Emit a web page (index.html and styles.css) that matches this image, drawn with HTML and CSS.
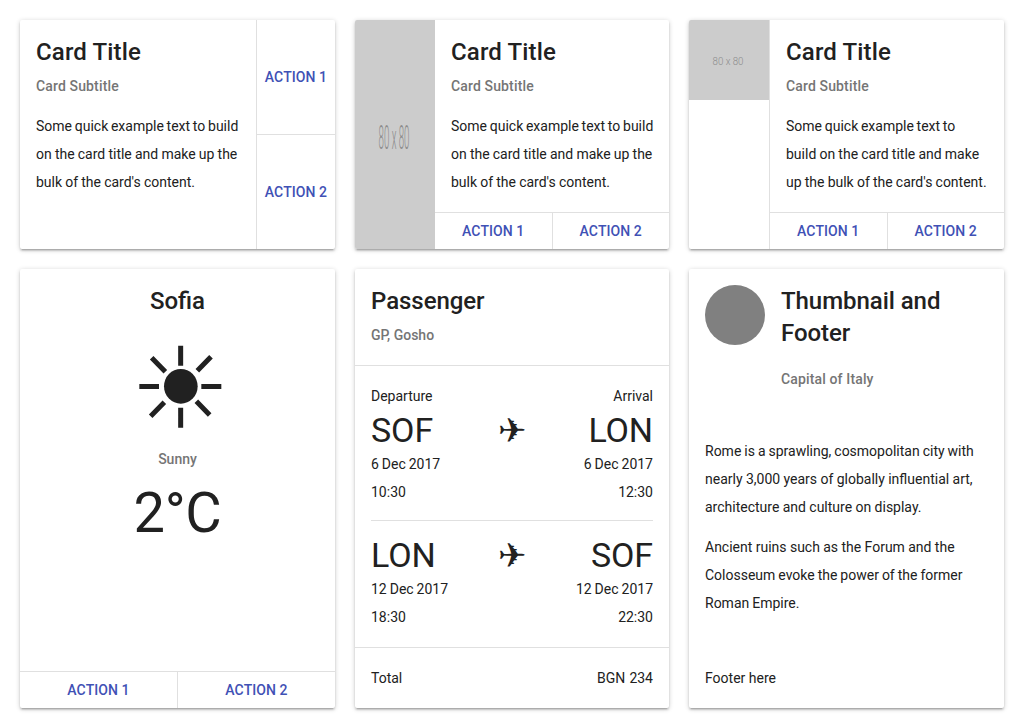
FILE: index.html
```html
<!DOCTYPE html>
<html lang="en">
<head>
<meta charset="utf-8">
<title>Cards</title>
<link rel="stylesheet" href="styles.css">
</head>
<body>
<main class="grid">
  <section class="card">
    <div class="body grow"><h2>Card Title</h2><h3>Card Subtitle</h3><p>Some quick example text to build<br><span class="loose">on the card title and make up the</span><br><span class="loose">bulk of the card's content.</span></p></div>
    <div class="actions vertical"><button>Action 1</button><button>Action 2</button></div>
  </section>
  <section class="card">
    <svg class="pic" viewBox="0 0 80 80" preserveAspectRatio="none"><rect width="80" height="80" fill="#ccc"/><text class="pic-text" x="39" y="45.2" text-anchor="middle" textLength="31" lengthAdjust="spacingAndGlyphs">80 x 80</text></svg>
    <div class="column"><div class="body grow"><h2>Card Title</h2><h3>Card Subtitle</h3><p>Some quick example text to build<br><span class="loose">on the card title and make up the</span><br><span class="loose">bulk of the card's content.</span></p></div>
    <div class="actions"><button>Action 1</button><button>Action 2</button></div></div>
  </section>
  <section class="card">
    <svg class="pic square" viewBox="0 0 80 80"><rect width="80" height="80" fill="#ccc"/><text class="pic-text" x="39" y="45" text-anchor="middle" textLength="31" lengthAdjust="spacingAndGlyphs">80 x 80</text></svg>
    <div class="column ruled"><div class="body grow"><h2>Card Title</h2><h3>Card Subtitle</h3><p>Some quick example text to<br><span class="loose">build on the card title and make</span><br><span class="loose">up the bulk of the card's content.</span></p></div>
    <div class="actions"><button>Action 1</button><button>Action 2</button></div></div>
  </section>
  <section class="card stack">
    <div class="body weather grow"><h2 class="plain">Sofia</h2>
      <svg class="sun" viewBox="0 0 260 260" role="img" aria-label="Sun"><ellipse cx="131.5" cy="130" rx="50.5" ry="52"/><path d="M131 8v60M131 194v60M7 130.5h59M193 130.5h60M44 44l41 42M222 41l-41 42M41 220l41-42M218 216l-40-41"/></svg>
      <h3 class="plain">Sunny</h3><div class="temp">2°C</div></div>
    <div class="actions"><button>Action 1</button><button>Action 2</button></div>
  </section>
  <section class="card stack">
    <div class="body passenger"><h2 class="tight">Passenger</h2><h3 class="plain">GP, Gosho</h3></div>
    <div class="flights">
      <div class="line"><span>Departure</span><span>Arrival</span></div>
      <div class="line route"><span>SOF</span><span class="plane">✈</span><span class="end">LON</span></div>
      <div class="line"><span>6 Dec 2017</span><span>6 Dec 2017</span></div>
      <div class="line"><span>10:30</span><span>12:30</span></div>
      <hr>
      <div class="line route"><span>LON</span><span class="plane">✈</span><span class="end">SOF</span></div>
      <div class="line"><span>12 Dec 2017</span><span>12 Dec 2017</span></div>
      <div class="line"><span>18:30</span><span>22:30</span></div>
    </div>
    <div class="line total"><span>Total</span><span>BGN 234</span></div>
  </section>
  <section class="card stack">
    <header class="person"><div class="avatar"></div><div><h2 class="tight">Thumbnail and Footer</h2><h3>Capital of Italy</h3></div></header>
    <div class="copy grow"><p>Rome is a sprawling, cosmopolitan city with<br><span class="even">nearly 3,000 years of globally influential art,</span><br><span class="even">architecture and culture on display.</span></p><p><span class="even">Ancient ruins such as the Forum and the</span><br>Colosseum evoke the power of the former<br>Roman Empire.</p></div>
    <footer>Footer here</footer>
  </section>
</main>
</body>
</html>
```
FILE: styles.css
```css
* { box-sizing: border-box; }
body { margin: 0; background: #fff; color: #212121; font: 14px/28px Roboto, sans-serif; }
.grid { display: grid; grid-template-columns: 315px 314px 315px; grid-template-rows: 229px 439px; column-gap: 20px; row-gap: 20px; padding: 20px; }
.card { display: flex; min-width: 0; border-radius: 2px; background: #fff; box-shadow: 0 1px 5px rgba(0,0,0,.2), 0 2px 2px rgba(0,0,0,.14), 0 3px 1px -2px rgba(0,0,0,.12); }
.stack, .column { display: flex; flex-direction: column; }
.column { flex: 1; min-width: 0; }
.ruled { border-left: 1px solid #e0e0e0; }
.grow { flex: 1; }
.body { min-width: 0; padding: 16px; }
h2, h3, p { margin: 0; }
h2 { font-size: 24px; line-height: 32px; font-weight: 500; letter-spacing: .14px; }
h3 { margin-top: 4px; color: #757575; font-size: 14px; line-height: 28px; font-weight: 500; letter-spacing: .14px; }
.plain { letter-spacing: normal; }
.tight { letter-spacing: -.05px; }
.body p { margin-top: 12px; white-space: nowrap; word-spacing: -.75px; }
.body .loose { word-spacing: -.3px; }
.actions { display: flex; height: 37px; border-top: 1px solid #e0e0e0; }
button { flex: 1; padding: 0 8px; border: 0; background: transparent; color: #3f51b5; font: 500 14px/36px Roboto, sans-serif; letter-spacing: .08px; text-transform: uppercase; white-space: nowrap; }
button + button { border-left: 1px solid #e0e0e0; }
.vertical { width: 79px; height: auto; flex-direction: column; border-top: 0; border-left: 1px solid #e0e0e0; }
.vertical button { padding: 0; }
.vertical button + button { border-left: 0; border-top: 1px solid #e0e0e0; }
.pic { display: block; flex: none; width: 80px; height: 229px; border-radius: 2px 0 0 2px; }
.square { height: 80px; border-radius: 2px 0 0 0; }
.pic-text { fill: #8c8c8c; font: 300 11.4px Roboto, sans-serif; }
.weather { display: flex; flex-direction: column; align-items: center; }
.sun { width: 86.67px; height: 86.67px; margin: 26.33px 0 11px 5px; fill: #212121; }
.sun path { fill: none; stroke: #212121; stroke-width: 15; }
.temp { margin-top: 12px; font-size: 56px; line-height: 56px; letter-spacing: -.3px; }
.passenger { height: 97px; border-bottom: 1px solid #e0e0e0; }
.flights { flex: 1; padding: 16px; word-spacing: -.5px; }
.line { display: flex; justify-content: space-between; }
.route { font-size: 34px; line-height: 40px; letter-spacing: -.1px; }
.route span { flex: 1; }
.route .plane { text-align: center; font-family: "DejaVu Sans", sans-serif; }
.end { text-align: right; }
hr { width: 100%; height: 1px; margin: 14px 0; border: 0; background: #e0e0e0; }
.total { height: 61px; padding: 16px; border-top: 1px solid #e0e0e0; word-spacing: .6px; }
.person { display: flex; gap: 16px; padding: 16px; }
.avatar { flex: none; width: 60px; height: 60px; border-radius: 50%; background: gray; }
.person h3 { margin-top: 16px; }
.copy { padding: 28px 16px 16px; word-spacing: -.5px; }
.copy .even { word-spacing: -.1px; }
.copy p + p { margin-top: 12px; }
footer { padding: 16px; }
```
